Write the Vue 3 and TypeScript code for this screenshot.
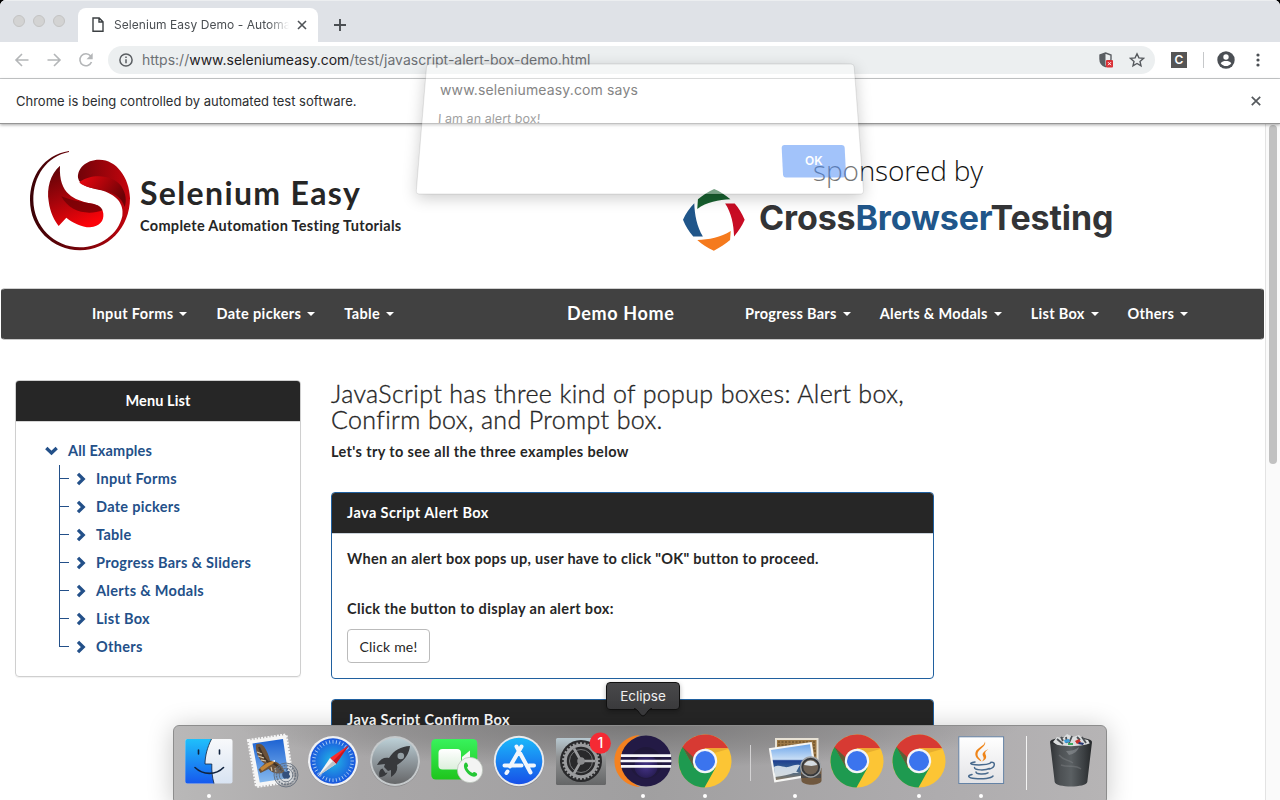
<script setup lang="ts">
interface NavItem {
  label: string
}
interface DockItem {
  kind: string
  running: boolean
}

const leftNav: NavItem[] = [{ label: 'Input Forms' }, { label: 'Date pickers' }, { label: 'Table' }]
const rightNav: NavItem[] = [
  { label: 'Progress Bars' },
  { label: 'Alerts & Modals' },
  { label: 'List Box' },
  { label: 'Others' },
]
const menu: string[] = [
  'Input Forms',
  'Date pickers',
  'Table',
  'Progress Bars & Sliders',
  'Alerts & Modals',
  'List Box',
  'Others',
]
const dock: DockItem[] = [
  { kind: 'finder', running: true },
  { kind: 'mail', running: false },
  { kind: 'safari', running: false },
  { kind: 'launchpad', running: false },
  { kind: 'facetime', running: false },
  { kind: 'appstore', running: false },
  { kind: 'settings', running: false },
  { kind: 'eclipse', running: true },
  { kind: 'chrome', running: true },
  { kind: 'divider', running: false },
  { kind: 'preview', running: true },
  { kind: 'chrome', running: false },
  { kind: 'chrome', running: true },
  { kind: 'java', running: true },
  { kind: 'divider tall', running: false },
  { kind: 'trash', running: false },
]
const ticks: number[] = Array.from({ length: 36 }, (_, i) => i * 10)
const teeth: number[] = Array.from({ length: 30 }, (_, i) => i * 12)
</script>

<template>
  <div class="screen">
    <div class="window">
      <div class="tabstrip">
        <div class="lights"><i></i><i></i><i></i></div>
        <div class="tab">
          <svg class="doc" width="12" height="16" viewBox="0 0 12 16">
            <path d="M1 1h6.2L11 4.900V14.300H1z M7 1v4h4" fill="none" stroke="#3c4043" stroke-width="1.400" />
          </svg>
          <span class="tab-title">Selenium Easy Demo - Automa</span>
          <svg class="tab-close" width="10" height="10" viewBox="0 0 10 10">
            <path d="M1 1l8 8M9 1l-8 8" stroke="#4f5357" stroke-width="1.600" />
          </svg>
        </div>
        <svg class="plus" width="14" height="14" viewBox="0 0 14 14">
          <path d="M7 1v12M1 7h12" stroke="#4a4e52" stroke-width="1.900" />
        </svg>
      </div>

      <div class="toolbar">
        <svg width="16" height="14" viewBox="0 0 16 14" class="back">
          <path d="M14.500 7H2M8 1L2 7l6 6" fill="none" stroke="#b4b6b8" stroke-width="1.600" />
        </svg>
        <svg width="16" height="14" viewBox="0 0 16 14" class="fwd">
          <path d="M1.500 7H14M8 1l6 6-6 6" fill="none" stroke="#b4b6b8" stroke-width="1.600" />
        </svg>
        <svg width="16" height="16" viewBox="0 0 16 16" class="reload">
          <path d="M12.600 4A6 6 0 1 0 13.500 10" fill="none" stroke="#b4b6b8" stroke-width="1.600" />
          <path d="M14.700 1v6.200H8.500z" fill="#b4b6b8" />
        </svg>
        <div class="omnibox">
          <svg width="14" height="14" viewBox="0 0 14 14">
            <circle cx="7" cy="7" r="6.100" fill="none" stroke="#5a5e62" stroke-width="1.500" />
            <path d="M7 6.200v4M7 3.500v1.500" stroke="#5a5e62" stroke-width="1.500" />
          </svg>
          <div class="url">https://<b>www.seleniumeasy.com</b>/test/javascript-alert-box-demo.html</div>
          <svg class="shield" width="16" height="17" viewBox="0 0 16 17">
            <path d="M6.500 1L12 3v4c0 4-2.500 6.500-5.500 7.500C3.500 13.500 1 11 1 7V3z" fill="#eceff0" stroke="#5a5e62" stroke-width="1.400" />
            <path d="M6.500 1v13.500C3.500 13.500 1 11 1 7V3z" fill="#5a5e62" />
            <rect x="7" y="8" width="7" height="7.500" rx="1" fill="#d93036" />
            <path d="M9 10.200l3 3M12 10.200l-3 3" stroke="#fff" stroke-width="1" />
          </svg>
          <svg class="star" width="16" height="16" viewBox="0 0 16 16">
            <path d="M8 1.800l1.900 4.100 4.500.5-3.400 3 1 4.400L8 11.500l-4 2.300 1-4.400-3.400-3 4.500-.5z" fill="none" stroke="#55595d" stroke-width="1.400" />
          </svg>
        </div>
        <div class="ext">C</div>
        <div class="tb-sep"></div>
        <svg class="avatar" width="18" height="18" viewBox="0 0 18 18">
          <circle cx="9" cy="9" r="8.700" fill="#4b4f54" />
          <circle cx="9" cy="6" r="2.700" fill="#fff" />
          <path d="M3.700 12.300C4.500 10.500 7 9.900 9 9.900s4.500.6 5.300 2.400C13 14.200 11 15.100 9 15.100s-4-.9-5.300-2.800z" fill="#fff" />
        </svg>
        <svg class="dots" width="4" height="16" viewBox="0 0 4 16">
          <g fill="#4b4f54"><circle cx="2" cy="3" r="1.600" /><circle cx="2" cy="8" r="1.600" /><circle cx="2" cy="13" r="1.600" /></g>
        </svg>
      </div>

      <div class="infobar">
        <span>Chrome is being controlled by automated test software.</span>
        <svg width="10" height="10" viewBox="0 0 10 10">
          <path d="M.8.8l8.400 8.400M9.200.8L.8 9.200" stroke="#55595d" stroke-width="1.700" />
        </svg>
      </div>

      <div class="viewport">
        <div class="page">
          <header class="banner">
            <svg class="se-logo" width="102" height="102" viewBox="87 61 306 306">
              <defs>
                <linearGradient id="se-a" x1="0" y1="0" x2="1" y2="0">
                  <stop offset="0" stop-color="#3a0206" /><stop offset=".55" stop-color="#7c0309" /><stop offset="1" stop-color="#c4040d" />
                </linearGradient>
                <linearGradient id="se-b" x1=".2" y1="0" x2=".6" y2="1">
                  <stop offset="0" stop-color="#5e0307" /><stop offset=".5" stop-color="#a8040b" /><stop offset="1" stop-color="#fb0309" />
                </linearGradient>
                <linearGradient id="se-c" x1="0" y1="0" x2="1" y2=".5">
                  <stop offset="0" stop-color="#ef060f" /><stop offset="1" stop-color="#6c0206" />
                </linearGradient>
              </defs>
              <path d="M207 64C130 76 90 140 90 212c0 83 67 150 150 150s150-67 150-157C388 145 350 90 298 90c-42 0-66 28-64 54 4 24 36 30 66 37 50 13 73 42 67 78-12 55-67 94-127 94C162 353 101 290 100 212 99 140 140 80 207 67z" fill="url(#se-a)" />
              <path d="M238 158c40-30 104-20 126 12 15 24 16 45 10 62-10-32-38-47-74-52-30-6-52-10-62-22z" fill="url(#se-c)" />
              <path d="M180 108c-30 27-40 67-34 107 4 35 19 60 30 74l23-25c16 14 46 29 71 29 30-3 42-20 40-41-2-17-15-27-40-31-45-11-95-26-90-113z" fill="url(#se-b)" />
              <path d="M184 200c25 48 80 58 124 42-6-14-20-18-38-21-36-6-66-12-86-21z" fill="#6b0206" opacity=".75" />
            </svg>
            <div class="brand">
              <div class="brand-name">Selenium Easy</div>
              <div class="brand-sub">Complete Automation Testing Tutorials</div>
            </div>
            <div class="sponsor">
              <div class="sponsor-by">sponsored by</div>
              <div class="cbt">
                <svg width="62" height="62" viewBox="69 177 187 187">
                  <path d="M112 237l2-29c14-12 30-22 49-31 18 8 34 18 49 31-35 1-72 9-100 29z" fill="#17602f" />
                  <path d="M196 221h29c12 14 22 30 30 49-8 19-19 35-32 50-1-35-8-71-27-99z" fill="#c80c24" />
                  <path d="M213 304l-2 27c-15 13-31 23-49 32-19-8-35-18-50-32 35-1 71-8 101-27z" fill="#f57a1d" />
                  <path d="M103 220c1 35 8 71 26 100h-29c-13-14-23-30-31-50 8-18 20-36 34-50z" fill="#20568a" />
                </svg>
                <div class="cbt-text">Cross<b>Browser</b>Testing</div>
              </div>
            </div>
          </header>

          <nav class="navbar">
            <div class="nav-left">
              <a v-for="n in leftNav" :key="n.label">{{ n.label }}<i></i></a>
            </div>
            <div class="nav-home">Demo Home</div>
            <div class="nav-right">
              <a v-for="n in rightNav" :key="n.label">{{ n.label }}<i></i></a>
            </div>
          </nav>

          <div class="columns">
            <aside class="menu">
              <div class="menu-head">Menu List</div>
              <div class="tree">
                <div class="root">
                  <svg width="14" height="10" viewBox="0 0 14 10"><path d="M1.300 2l5.200 5 5.200-5" fill="none" stroke="#235089" stroke-width="3.300" /></svg>
                  <span>All Examples</span>
                </div>
                <ul>
                  <li v-for="m in menu" :key="m">
                    <i></i>
                    <svg width="10" height="14" viewBox="0 0 10 14"><path d="M2 1.800L7.200 7 2 12.200" fill="none" stroke="#235089" stroke-width="3.300" /></svg>
                    <span>{{ m }}</span>
                  </li>
                </ul>
              </div>
            </aside>
            <main>
              <h3>JavaScript has three kind of popup boxes: Alert box,<br />Confirm box, and Prompt box.</h3>
              <p class="lead">Let's try to see all the three examples below</p>
              <section class="panel">
                <div class="panel-head">Java Script Alert Box</div>
                <div class="panel-body">
                  <p class="first">When an alert box pops up, user have to click "OK" button to proceed.</p>
                  <p class="second">Click the button to display an alert box:</p>
                  <button>Click me!</button>
                </div>
              </section>
              <section class="panel">
                <div class="panel-head">Java Script Confirm Box</div>
                <div class="panel-body"></div>
              </section>
            </main>
          </div>
        </div>
        <div class="scrollbar"><div class="thumb"></div></div>
      </div>
    </div>

    <div class="alert">
      <svg class="alert-bg" width="500" height="190" viewBox="390 40 500 190">
        <defs>
          <filter id="al-shadow" x="-10%" y="-20%" width="120%" height="150%">
            <feGaussianBlur in="SourceAlpha" stdDeviation="8" />
            <feOffset dy="4" result="s" />
            <feComposite in="s" in2="SourceAlpha" operator="out" />
          </filter>
        </defs>
        <path d="M430 64H851Q854 64 854.200 67L863.500 191Q863.500 194 861 194H419Q416 194 416.300 191L426.500 67Q427 64 430 64z" fill="#000" filter="url(#al-shadow)" opacity=".2" />
        <path d="M430 64H851Q854 64 854.200 67L863.500 191Q863.500 194 861 194H419Q416 194 416.300 191L426.500 67Q427 64 430 64z" fill="#fff" fill-opacity=".42" stroke="#000" stroke-opacity=".12" stroke-width=".8" />
        <path d="M784.500 145H841.500Q844.500 145 844.700 148L846 174.500Q846 177.500 843 177.500H786Q783.200 177.500 783 174.500L781.700 148Q781.700 145 784.500 145z" fill="#4285f4" fill-opacity=".49" />
      </svg>
      <div class="alert-title">www.seleniumeasy.com says</div>
      <div class="alert-msg">I am an alert box!</div>
      <div class="alert-ok">OK</div>
    </div>

    <div class="tooltip">Eclipse
      <svg width="22" height="10" viewBox="0 0 22 10"><path d="M1 0C6 0 8 7.500 11 7.500S16 0 21 0z" fill="#3b3b3d" /><path d="M2 .5C6 .5 8 8 11 8S16 .5 20 .5" fill="none" stroke="#111" stroke-width="1" /></svg>
    </div>

    <div class="dock">
      <div v-for="(d, i) in dock" :key="i" class="slot" :class="d.kind">
        <svg v-if="d.kind === 'finder'" viewBox="0 0 60 60">
          <defs>
            <linearGradient id="fi-a" x1="0" y1="0" x2="0" y2="1"><stop offset="0" stop-color="#1fc0fb" /><stop offset="1" stop-color="#1659ee" /></linearGradient>
            <linearGradient id="fi-b" x1="0" y1="0" x2="0" y2="1"><stop offset="0" stop-color="#f8f9fb" /><stop offset="1" stop-color="#d8e3f2" /></linearGradient>
          </defs>
          <rect x="6.300" y="8" width="47.200" height="44.500" rx="2" fill="url(#fi-b)" />
          <path d="M8.300 8H32.500C28 17 26.200 25 26 33H32.800C32.600 40 33.200 46 35 52.500H8.300Q6.300 52.500 6.300 50.500V10Q6.300 8 8.300 8z" fill="url(#fi-a)" />
          <path d="M32.500 8C28 17 26.200 25 26 33H32.800C32.600 40 33.200 46 35 52.500" fill="none" stroke="#10233f" stroke-width=".8" />
          <path d="M16 36.500C24 44.300 37 44.300 44.500 36.500M19.500 19v4M40.500 19v4" fill="none" stroke="#10233f" stroke-width="1.600" stroke-linecap="round" />
        </svg>

        <svg v-else-if="d.kind === 'mail'" viewBox="0 0 60 60">
          <defs><linearGradient id="ma-a" x1="0" y1="0" x2="0" y2="1"><stop offset="0" stop-color="#1c62d2" /><stop offset="1" stop-color="#86b9ee" /></linearGradient></defs>
          <path d="M7.500 9.500L45 4l6.800 46L15.500 55.500z" fill="#f6f6f6" stroke="#f6f6f6" stroke-width="3" stroke-dasharray="2 1.200" />
          <path d="M11.500 12.500L42 8l5.800 39-29 4.500z" fill="url(#ma-a)" />
          <path d="M15 13.500q5-2 8 2c3 5 5 9 6 14l5 1c5 2 9 6 9.500 11-6 2-12 1-16-3.500l-8 4-2-3.500 6-6c-6-4-9-11-8.500-19z" fill="#6b523b" />
          <path d="M18 16c2 5 4 11 9 15l5 1c4 2 7 5 9 8" stroke="#3f3226" stroke-width="2" fill="none" />
          <path d="M16 21l5 2M17 25l6 2M20 29l5 1M30 36l1 4M34 37l1 4" stroke="#d9c9ad" stroke-width="1.100" fill="none" />
          <path d="M19 37l7-5 6-2 1 2-5 3-7 5z" fill="#c28436" />
          <path d="M31 30l3-1v2z" fill="#fff" />
          <circle cx="45" cy="44" r="12" fill="#7f8b99" fill-opacity=".25" stroke="#5f6977" stroke-opacity=".8" stroke-width="1" />
          <circle cx="45" cy="44" r="9.500" fill="none" stroke="#5f6977" stroke-opacity=".8" stroke-width="1.500" stroke-dasharray="2 1" />
          <circle cx="45" cy="44" r="6.800" fill="none" stroke="#5f6977" stroke-width=".8" />
          <path d="M45.500 40.500c1-1 3-.5 3.500.5-1.500 1.500-1 3 .3 4-.8 2-1.800 3-2.800 2.700-1-.4-1.600-.4-2.600 0-1.600.3-3.600-4-2.300-6.200 1-1.300 2.500-1.300 3.900-.5zM45 39.800c0-1.300.8-2.200 2-2.600 0 1.400-.8 2.400-2 2.600" fill="#34507c" />
        </svg>

        <svg v-else-if="d.kind === 'safari'" viewBox="0 0 60 60">
          <defs><radialGradient id="sa-a"><stop offset="0" stop-color="#22b8e6" /><stop offset="1" stop-color="#1a56dd" /></radialGradient></defs>
          <circle cx="30" cy="30.600" r="25" fill="#6d6d6f" opacity=".5" />
          <circle cx="30" cy="30" r="25" fill="#f0f1f3" />
          <circle cx="30" cy="30" r="22.700" fill="url(#sa-a)" />
          <path v-for="t in ticks" :key="t" d="M30 9v3.500" stroke="#bcd6f5" stroke-width=".8" :transform="`rotate(${t} 30 30)`" />
          <path d="M45.800 14.200L33 33 27 27z" fill="#fb2b2b" />
          <path d="M45.800 14.200L33 33 30 30z" fill="#c81722" />
          <path d="M14.500 45.500L27 27l6 6z" fill="#f4f4f4" />
          <path d="M14.500 45.500L30 30l3 3z" fill="#bfc3c8" />
        </svg>

        <svg v-else-if="d.kind === 'launchpad'" viewBox="0 0 60 60">
          <defs><linearGradient id="la-a" x1="0" y1="0" x2="0" y2="1"><stop offset="0" stop-color="#bcd0d7" /><stop offset=".5" stop-color="#90999e" /><stop offset="1" stop-color="#666769" /></linearGradient></defs>
          <circle cx="30" cy="30.600" r="25" fill="#68686a" opacity=".5" />
          <circle cx="30" cy="30" r="25" fill="#c5c9cb" />
          <circle cx="30" cy="30" r="23" fill="url(#la-a)" />
          <path d="M45 15c-9 .5-16 4-21 12-5-1-9 1-12 7l8-1-1 3 4 4 3-1v7c5-3 7-7 6-12 8-5 12-11 13-19z" fill="#37393c" />
          <path d="M17.500 37.500c-3 1-4 4-3 8.500 4 0 7-2 8-4.500l-2 .5z" fill="#37393c" />
          <circle cx="35.800" cy="25" r="3.300" fill="#939ea3" />
        </svg>

        <svg v-else-if="d.kind === 'facetime'" viewBox="0 0 60 60">
          <defs>
            <linearGradient id="fa-a" x1="0" y1="0" x2="0" y2="1"><stop offset="0" stop-color="#38f25c" /><stop offset="1" stop-color="#1fc51d" /></linearGradient>
            <linearGradient id="fa-b" x1="0" y1="0" x2="0" y2="1"><stop offset="0" stop-color="#fff" /><stop offset="1" stop-color="#dcefdc" /></linearGradient>
          </defs>
          <rect x="4.300" y="8" width="46" height="40.500" rx="4.500" fill="url(#fa-a)" />
          <rect x="11.500" y="18" width="22.500" height="20.500" rx="4" fill="url(#fa-b)" />
          <path d="M35 26l8-6.500v17L35 31z" fill="#f2faf2" />
          <circle cx="43" cy="39" r="12.700" fill="#f3f4f3" stroke="#a9b3a9" stroke-width=".6" />
          <path d="M37.500 32.500c1-1.500 2.200-1 3 .5 1 1.800.8 2.400-.5 3.500 1 2.500 3 4.500 5.500 5.500 1.200-1.300 2-1.300 3.500-.2 1.600 1.200 1.500 2.200.2 3.200-5 3.300-14.700-7-11.700-12.500z" fill="#25c735" />
        </svg>

        <svg v-else-if="d.kind === 'appstore'" viewBox="0 0 60 60">
          <defs><linearGradient id="ap-a" x1="0" y1="0" x2="0" y2="1"><stop offset="0" stop-color="#1bb8fa" /><stop offset="1" stop-color="#1750e8" /></linearGradient></defs>
          <circle cx="30" cy="30.600" r="25.200" fill="#6d6d6f" opacity=".5" />
          <circle cx="30" cy="30" r="25.200" fill="#e9ebee" />
          <circle cx="30" cy="30" r="23.300" fill="url(#ap-a)" />
          <g stroke="#f2f6fc" stroke-width="4" stroke-linecap="round" fill="none">
            <path d="M27.500 15.500l14 26M32.500 15.500L21 35.500M18.500 40.500L17.500 42M15.500 34.500h17M40 34.500h5" />
          </g>
          <path d="M27 37.500h9" stroke="#1b6cec" stroke-width="1.200" />
        </svg>

        <svg v-else-if="d.kind === 'settings'" viewBox="0 0 60 60">
          <defs><linearGradient id="st-a" x1="0" y1="0" x2="0" y2="1"><stop offset="0" stop-color="#b8c9d1" /><stop offset=".4" stop-color="#909293" /><stop offset="1" stop-color="#656667" /></linearGradient></defs>
          <rect x="5" y="7" width="50" height="47" rx="1.500" fill="url(#st-a)" />
          <circle cx="30" cy="30" r="21" fill="#29292b" />
          <circle cx="30" cy="30" r="15.700" fill="none" stroke="#9b9c9e" stroke-width="3" />
          <path v-for="t in teeth" :key="t" d="M30 11.200v3" stroke="#9b9c9e" stroke-width="1.900" :transform="`rotate(${t} 30 30)`" />
          <circle cx="30" cy="30" r="11.500" fill="none" stroke="#77787a" stroke-width="1" />
          <path d="M30 30h14M30 30l-7-12.500M30 30l-7 12.500" stroke="#9b9c9e" stroke-width="2.600" />
          <circle cx="30" cy="30" r="3.800" fill="#8b8c8e" />
          <circle cx="49.300" cy="12.200" r="10.600" fill="#f52a34" />
          <text x="49.300" y="17" text-anchor="middle" fill="#fff" class="badge">1</text>
        </svg>

        <svg v-else-if="d.kind === 'eclipse'" viewBox="0 0 60 60">
          <defs><radialGradient id="ec-a" cy=".6"><stop offset="0" stop-color="#453488" /><stop offset=".7" stop-color="#2a1f58" /><stop offset=".75" stop-color="#21193f" /><stop offset="1" stop-color="#1f183a" /></radialGradient></defs>
          <path d="M27 4C12 5 1.500 16 1.500 30S12 55 27 56C17 51 9 42 9 30S17 9 27 4z" fill="#f58220" />
          <circle cx="33" cy="30" r="25.500" fill="#231a45" />
          <circle cx="33" cy="32" r="16" fill="url(#ec-a)" />
          <path d="M8 24.600h50M7.500 30h51M8 35.400h50" stroke="#f7f7fa" stroke-width="2.700" />
        </svg>

        <svg v-else-if="d.kind === 'chrome'" viewBox="0 0 60 60">
          <circle cx="30" cy="30" r="26.500" fill="#fcc535" />
          <path d="M7.300 16.300A26.500 26.500 0 0 1 53.200 17.300H30L18.500 36z" fill="#d73a33" />
          <path d="M7.500 16A26.500 26.500 0 0 0 29.500 56.500L40.700 36.500 30 42 19 36.500z" fill="#1e9a50" />
          <path d="M30 18h23.300l-14 4z" fill="#d99c2a" opacity=".6" />
          <path d="M7.500 16L18.800 36.500l1-9z" fill="#137338" opacity=".6" />
          <circle cx="30" cy="30" r="12.200" fill="#f3f5f7" />
          <circle cx="30" cy="30" r="10" fill="#3b74ee" />
        </svg>

        <svg v-else-if="d.kind === 'preview'" viewBox="0 0 60 60">
          <defs><linearGradient id="pr-a" x1="0" y1="0" x2="0" y2="1"><stop offset="0" stop-color="#6ea6ea" /><stop offset=".42" stop-color="#c8def5" /><stop offset=".46" stop-color="#1d3f8f" /><stop offset=".7" stop-color="#3a6492" /><stop offset="1" stop-color="#8a7a62" /></linearGradient></defs>
          <path d="M10 7h43.500v34H10z" fill="#e8e2d5" />
          <path d="M12 9h39.500v30H12z" fill="#9c7846" />
          <path d="M13 11h38M13 14h38M13 17h38M42 20h9M42 24h9" stroke="#5d421f" stroke-width="1" stroke-dasharray="2 1.500" />
          <path d="M3.800 17.300L46.700 11 52 44.500 9.300 51.500z" fill="#f5f5f3" />
          <path d="M6 19L45 13.300 49.500 42.500 11 49z" fill="url(#pr-a)" />
          <path d="M9 36c6-3 9 1 14 0s7-3 12-2l-4 7c-7 3-14 4-21 5zM20 42l8-3 6 3" fill="#e6edf2" opacity=".85" />
          <path d="M35.500 37h21v13c-2 5-18 5-20 0z" fill="#70583f" />
          <path d="M36 43h20v4H36z" fill="#4d4a48" />
          <circle cx="45.700" cy="36" r="10" fill="#35373a" stroke="#9fa3a7" stroke-width="1.300" />
          <circle cx="45.700" cy="36" r="7.500" fill="#6f6255" />
          <path d="M39 34c3-6 10-6 13.400 0l-6 1z" fill="#d7dde2" />
        </svg>

        <svg v-else-if="d.kind === 'java'" viewBox="0 0 60 60">
          <defs><linearGradient id="ja-a" x1="0" y1="0" x2="0" y2="1"><stop offset="0" stop-color="#fff" /><stop offset="1" stop-color="#e3e3e6" /></linearGradient></defs>
          <rect x="7.800" y="5.800" width="44.800" height="46.700" fill="url(#ja-a)" stroke="#6583a6" stroke-width="1" />
          <path d="M34 10.500c2 5-8 8-7.500 13 0 3 3 4 4 7-4-2-7-5-6-9 1-5 9-6 9.500-11zM37.500 18c-4 2-7 4-5.500 7 1 2 1 3-1 5.500 4-2 5-4 3.500-7-1-2 0-3.500 3-5.500z" fill="#ef8418" />
          <g fill="none" stroke="#47698d" stroke-width="1.500" stroke-linecap="round">
            <path d="M24 31c-4 .5-5.500 1.500-3 2.200 5 1.200 14 .8 18-.8M39.500 31.500c5-1.500 5.500 4.500-1 6.500M23.500 36.500c0 3 11 3 15 1M25 41c0 2.500 9 2.500 12 .8M21 43.500c-5 1-4.500 3.500 3 4 8 .8 16-.2 18-2.500" />
          </g>
        </svg>

        <svg v-else-if="d.kind === 'trash'" viewBox="0 0 60 60">
          <defs><linearGradient id="tr-a" x1="0" y1="0" x2="1" y2="0"><stop offset="0" stop-color="#303336" /><stop offset=".25" stop-color="#4d5154" /><stop offset=".5" stop-color="#5b6063" /><stop offset=".8" stop-color="#3c4043" /><stop offset="1" stop-color="#25282a" /></linearGradient></defs>
          <ellipse cx="30" cy="11" rx="21" ry="5" fill="#292c2f" />
          <path d="M12 11l4-5 6 1 4-4 6 3 6-2 4 4 5 1 2 4-9 4H20z" fill="#dcdedf" />
          <path d="M16 8l6 5M31 5l-3 7M41 6l4 6M20 6l2 4M36 6l3 3M25 6l1 6" stroke="#4c5054" stroke-width="1.800" />
          <path d="M23 9l5-1 1 3-5 1z" fill="#3a9ddb" /><path d="M34 10l4-2 2 3-4 2z" fill="#c8322c" /><path d="M27 12h5v2h-5z" fill="#3eab60" /><path d="M38 11l5 1-1 2-5-1z" fill="#27376f" />
          <path d="M9 11c6 5.500 36 5.500 42 0L46.300 51c-1 6-31.600 6-32.600 0z" fill="url(#tr-a)" />
          <path d="M25 20c5 0 9-1 13-4-1 4-5 7-10 8z" fill="#a0a5a8" fill-opacity=".45" />
          <path d="M20 34c8 3 14-1 20 4M18 24c5 6 8 4 14 8" fill="none" stroke="#8b9093" stroke-opacity=".35" stroke-width="1.500" />
        </svg>
        <span v-else class="bar"></span>
        <i v-if="d.running" class="dot"></i>
      </div>
    </div>
  </div>
</template>

<style>
html,
body {
  margin: 0;
  background: #000;
  overflow: hidden;
}
</style>

<style scoped>
* {
  box-sizing: border-box;
}
.screen {
  position: relative;
  width: 1280px;
  height: 800px;
  overflow: hidden;
  font-family: Inter, "Liberation Sans", sans-serif;
}
svg {
  display: block;
  flex: none;
}
.window {
  height: 800px;
  display: flex;
  flex-direction: column;
  background: #fff;
  border-radius: 6px 6px 0 0;
  overflow: hidden;
}
.tabstrip {
  height: 42px;
  flex: none;
  display: flex;
  background: #dfe2e7;
  border-top: 1px solid #eceef0;
}
.lights {
  width: 78px;
  display: flex;
  gap: 8px;
  padding: 14px 0 0 13px;
}
.lights i {
  width: 12px;
  height: 12px;
  border-radius: 50%;
  background: #d3d3d3;
  border: 1px solid #c3c3c3;
}
.tab {
  width: 240px;
  height: 34px;
  margin-top: 7px;
  background: #fff;
  border-radius: 8px 8px 0 0;
  display: flex;
  align-items: center;
}
.doc {
  margin-left: 14px;
}
.tab-title {
  width: 175px;
  margin-left: 10px;
  margin-top: -1px;
  font-size: 12px;
  letter-spacing: 0.05px;
  color: #4b4f53;
  white-space: nowrap;
  -webkit-mask-image: linear-gradient(90deg, #000 88%, transparent);
  mask-image: linear-gradient(90deg, #000 88%, transparent);
}
.tab-close {
  margin-left: 8px;
}
.plus {
  margin: 17px 0 0 15px;
}
.toolbar {
  height: 37px;
  flex: none;
  display: flex;
  align-items: center;
  border-bottom: 1px solid #c9cbcd;
}
.back {
  margin-left: 14px;
}
.fwd {
  margin-left: 16px;
}
.reload {
  margin-left: 16px;
}
.omnibox {
  margin-left: 14px;
  width: 1047px;
  height: 28px;
  border-radius: 14px;
  background: #eceff0;
  display: flex;
  align-items: center;
  padding-left: 11px;
}
.url {
  flex: 1;
  margin-left: 9px;
  margin-top: -1px;
  font-size: 14px;
  letter-spacing: 0;
  color: #6c7074;
  white-space: nowrap;
}
.url b {
  font-weight: 400;
  color: #1f2123;
}
.star {
  margin: 0 10px 0 14px;
}
.ext {
  width: 16px;
  height: 16px;
  margin-left: 16px;
  background: #555;
  color: #fff;
  font-size: 12px;
  font-weight: 600;
  line-height: 16px;
  text-align: center;
}
.tb-sep {
  width: 1px;
  height: 16px;
  margin-left: 16px;
  background: #c6c8ca;
}
.avatar {
  margin-left: 13px;
}
.dots {
  margin-left: 21px;
}
.infobar {
  height: 45px;
  flex: none;
  display: flex;
  align-items: center;
  justify-content: space-between;
  padding: 0 19px 0 16px;
  font-size: 13px;
  color: #2c2e30;
  border-bottom: 1px solid #959595;
  box-shadow: 0 1px 3px rgba(0, 0, 0, 0.35);
  position: relative;
}
.viewport {
  flex: 1;
  display: flex;
  min-height: 0;
}
.page {
  width: 1265px;
  overflow: hidden;
  font-family: Lato, "Open Sans", sans-serif;
  color: #262626;
  font-size: 14.5px;
  font-weight: 700;
  letter-spacing: 0.36px;
}
.scrollbar {
  width: 15px;
  border-left: 1px solid #e3e3e3;
  background: #fafafa;
  padding: 1px 0 0 3px;
}
.thumb {
  width: 8px;
  height: 339px;
  border-radius: 4px;
  background: #c1c1c1;
}
.banner {
  height: 164px;
  display: flex;
}
.se-logo {
  margin: 26px 0 0 29px;
}
.brand {
  margin: 50px 0 0 9px;
  width: 543px;
}
.brand-name {
  font-size: 32px;
  line-height: 38px;
  letter-spacing: 1.35px;
}
.brand-sub {
  line-height: 20px;
  margin-top: 4px;
  letter-spacing: 0.31px;
}
.sponsor {
  width: 432px;
  padding-top: 27px;
}
.sponsor-by {
  margin-left: 130px;
  font-family: "Open Sans", sans-serif;
  font-weight: 300;
  font-size: 28px;
  line-height: 38px;
  letter-spacing: -0.15px;
  color: #111;
  white-space: nowrap;
}
.cbt {
  display: flex;
  gap: 14px;
  white-space: nowrap;
}
.cbt-text {
  font-family: Inter, sans-serif;
  font-weight: 700;
  font-size: 34px;
  line-height: 57px;
  letter-spacing: -0.13px;
  color: #333436;
}
.cbt-text b {
  font-weight: inherit;
  color: #20568a;
}
.navbar {
  margin-left: 1px;
  margin-right: 1px;
  height: 52px;
  border: 1px solid #414141;
  border-top-color: #d0d0d0;
  border-bottom-color: #c8c8c8;
  border-radius: 4px;
  background: #414141;
  display: flex;
  align-items: center;
  padding-bottom: 2px;
  color: #fff;
}
.nav-left,
.nav-right {
  display: flex;
  gap: 29px;
}
.nav-left {
  width: 565px;
  padding-left: 90px;
}
.nav-right {
  letter-spacing: 0.3px;
}
.nav-home {
  width: 178px;
  font-size: 18px;
  letter-spacing: 0.65px;
}
.navbar a {
  display: flex;
  align-items: center;
  gap: 6px;
  white-space: nowrap;
}
.navbar a i {
  border: 4px solid transparent;
  border-top-color: #fff;
  border-bottom: 0;
  margin-top: 2px;
}
.columns {
  display: flex;
  margin-top: 40px;
  padding-left: 15px;
  gap: 30px;
}
.menu {
  width: 286px;
  height: 297px;
  border: 1px solid #cfcfcf;
  border-radius: 4px;
  box-shadow: 0 1px 1px rgba(0, 0, 0, 0.06);
}
.menu-head {
  height: 41px;
  line-height: 40px;
  background: #262626;
  color: #fff;
  text-align: center;
  letter-spacing: 0.1px;
  border-radius: 3px 3px 0 0;
  border-bottom: 1px solid #d5d5d5;
}
.tree {
  padding: 14px 0 0 29px;
  color: #235089;
  letter-spacing: 0.3px;
}
.root {
  display: flex;
  align-items: center;
  height: 29px;
}
.root span {
  margin-left: 9px;
  letter-spacing: 0.15px;
}
ul {
  list-style: none;
  margin: 0 0 0 14px;
  padding: 0;
}
li {
  display: flex;
  align-items: center;
  height: 28px;
}
li i {
  width: 10px;
  height: 28px;
  margin-top: -28px;
  border: solid #235089;
  border-width: 0 0 1px 1px;
}
li:first-child i {
  height: 14px;
  margin-top: -14px;
}
li svg {
  margin: -1px 0 0 7px;
}
li span {
  margin: -1px 0 0 10px;
}
main {
  width: 603px;
}
h3 {
  margin: 0;
  font-weight: 300;
  font-size: 25px;
  line-height: 26px;
  -webkit-text-stroke: 0.35px #262626;
  white-space: nowrap;
}
p {
  margin: 0;
  line-height: 20px;
  white-space: nowrap;
}
.first {
  letter-spacing: 0.29px;
}
.lead {
  margin: 10px 0 30px;
}
.panel {
  border: 1px solid #20609f;
  border-radius: 4px;
  margin-bottom: 20px;
  height: 187px;
}
.panel-head {
  height: 41px;
  line-height: 40px;
  padding-left: 15px;
  background: #262626;
  color: #fff;
  letter-spacing: 0.42px;
  border-radius: 3px 3px 0 0;
  border-bottom: 1px solid #cbd3db;
}
.panel-body {
  padding: 15px;
}
.second {
  margin: 30px 0 10px;
}
button {
  width: 83px;
  height: 34px;
  padding: 0;
  border: 1px solid #bbb;
  border-radius: 4px;
  background: #fff;
  color: #262626;
  font: 400 14px Lato, sans-serif;
  letter-spacing: 0.2px;
}
.alert {
  position: absolute;
  left: 390px;
  top: 40px;
  width: 500px;
  height: 190px;
  white-space: nowrap;
}
.alert-bg {
  position: absolute;
  left: 0;
  top: 0;
}
.alert-title {
  position: absolute;
  left: 50px;
  top: 40px;
  font-size: 14px;
  line-height: 20px;
  letter-spacing: 0.14px;
  color: #858585;
}
.alert-msg {
  position: absolute;
  left: 48px;
  top: 69px;
  font-size: 12.5px;
  line-height: 20px;
  letter-spacing: 0.05px;
  color: #a0a0a0;
  transform: skewX(-4deg);
}
.alert-ok {
  position: absolute;
  left: 415px;
  top: 111px;
  font-size: 12px;
  font-weight: 600;
  line-height: 20px;
  color: #fff;
}
.tooltip {
  position: absolute;
  left: 606px;
  top: 682px;
  width: 74px;
  height: 28px;
  border: 1px solid #111;
  border-radius: 4px;
  background: linear-gradient(#48484a, #3b3b3d);
  color: #f0f0f0;
  font-size: 13.5px;
  line-height: 26px;
  text-align: center;
  box-shadow: 0 2px 5px rgba(0, 0, 0, 0.3);
}
.tooltip svg {
  position: absolute;
  left: 25px;
  top: 25px;
}
.dock {
  position: absolute;
  left: 173px;
  top: 725px;
  width: 934px;
  height: 80px;
  padding: 5px 4px 0;
  display: flex;
  border: 1px solid #8d8d8d;
  border-radius: 6px;
  background:
    radial-gradient(ellipse 390px 42px at 455px 0, rgba(105, 104, 104, 0.7), rgba(120, 119, 119, 0.45) 60%, transparent),
    linear-gradient(90deg, #b9b8b8, #a9a7a8 20%, #a09fa0 50%, #aeacae 82%, #b6b4b5);
  box-shadow: 0 2px 26px rgba(0, 0, 0, 0.22);
}
.slot {
  position: relative;
  width: 62px;
  height: 74px;
}
.slot svg {
  width: 60px;
  height: 60px;
  margin-left: 1px;
}
.badge {
  font: 500 14px Inter, sans-serif;
}
.dot {
  position: absolute;
  left: 29px;
  top: 63px;
  width: 4px;
  height: 4px;
  border-radius: 50%;
  background: #fff;
}
.divider {
  width: 28px;
}
.bar {
  display: block;
  width: 1px;
  height: 36px;
  margin: 14px 0 0 14px;
  background: #d3d2d3;
}
.tall .bar {
  height: 54px;
  margin-top: 5px;
  background: #f3f3f3;
}
</style>
